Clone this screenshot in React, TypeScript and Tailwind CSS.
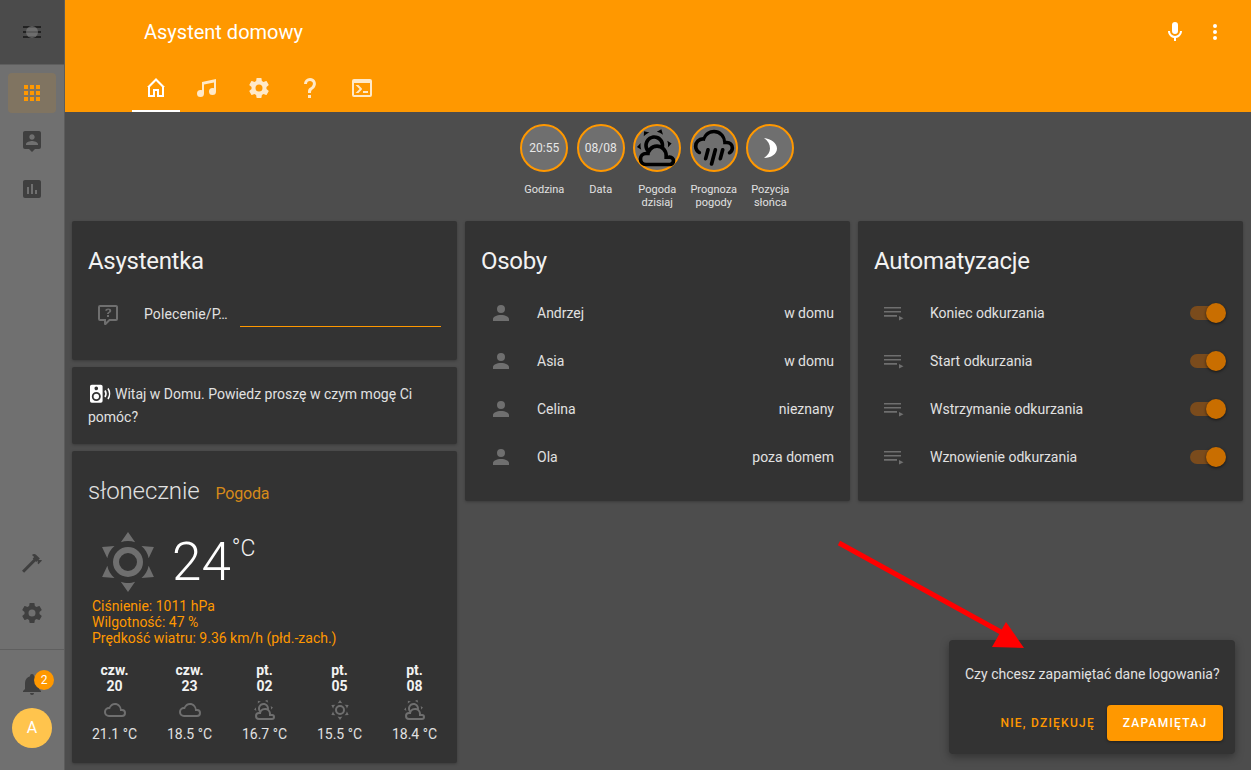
const paths = {
  sunny:
    "M12,7A5,5 0 0,1 17,12A5,5 0 0,1 12,17A5,5 0 0,1 7,12A5,5 0 0,1 12,7M12,9A3,3 0 0,0 9,12A3,3 0 0,0 12,15A3,3 0 0,0 15,12A3,3 0 0,0 12,9M12,2L14.39,5.42C13.65,5.15 12.84,5 12,5C11.16,5 10.35,5.15 9.61,5.42L12,2M3.34,7L7.5,6.65C6.9,7.16 6.36,7.78 5.94,8.5C5.5,9.24 5.25,10 5.11,10.79L3.34,7M3.36,17L5.12,13.23C5.26,14 5.53,14.78 5.95,15.5C6.37,16.24 6.91,16.86 7.5,17.37L3.36,17M20.65,7L18.88,10.79C18.74,10 18.47,9.23 18.05,8.5C17.63,7.78 17.1,7.15 16.5,6.64L20.65,7M20.64,17L16.5,17.36C17.09,16.85 17.62,16.22 18.04,15.5C18.46,14.77 18.73,14 18.87,13.21L20.64,17M12,22L9.59,18.56C10.33,18.83 11.14,19 12,19C12.82,19 13.63,18.83 14.37,18.56L12,22Z",
  partly:
    "M12.74,5.47C15.1,6.5 16.35,9.03 15.92,11.46C17.19,12.56 18,14.19 18,16V16.17C18.31,16.06 18.65,16 19,16A3,3 0 0,1 22,19A3,3 0 0,1 19,22H6A4,4 0 0,1 2,18A4,4 0 0,1 6,14H6.27C5,12.45 4.6,10.24 5.5,8.26C6.72,5.5 9.97,4.24 12.74,5.47M11.93,7.3C10.16,6.5 8.09,7.31 7.31,9.07C6.85,10.09 6.93,11.22 7.41,12.13C8.5,10.83 10.16,10 12,10C12.7,10 13.38,10.12 14,10.34C13.94,9.06 13.18,7.86 11.93,7.3M13.55,3.64C13,3.4 12.45,3.23 11.88,3.12L14.37,1.82L15.27,4.71C14.76,4.29 14.19,3.93 13.55,3.64M6.09,4.44C5.6,4.79 5.17,5.19 4.8,5.63L4.91,2.82L7.87,3.5C7.25,3.71 6.65,4.03 6.09,4.44M18,9.71C17.91,9.12 17.78,8.55 17.59,8L19.97,9.5L17.92,11.73C18.03,11.08 18.05,10.4 18,9.71M3.04,11.3C3.11,11.9 3.24,12.47 3.43,13L1.06,11.5L3.1,9.28C3,9.93 2.97,10.61 3.04,11.3M19,18H16V16A4,4 0 0,0 12,12A4,4 0 0,0 8,16H6A2,2 0 0,0 4,18A2,2 0 0,0 6,20H19A1,1 0 0,0 20,19A1,1 0 0,0 19,18Z",
  cloudy:
    "M6,19A5,5 0 0,1 1,14A5,5 0 0,1 6,9C7,6.65 9.3,5 12,5C15.43,5 18.24,7.66 18.5,11.03L19,11A4,4 0 0,1 23,15A4,4 0 0,1 19,19H6M19,13H17V12A5,5 0 0,0 12,7C9.5,7 7.45,8.82 7.06,11.19C6.73,11.07 6.37,11 6,11A3,3 0 0,0 3,14A3,3 0 0,0 6,17H19A2,2 0 0,0 21,15A2,2 0 0,0 19,13Z",
  pouring:
    "M9,12C9.53,12.14 9.85,12.69 9.71,13.22L8.41,18.05C8.27,18.59 7.72,18.9 7.19,18.76C6.65,18.62 6.34,18.07 6.5,17.54L7.78,12.71C7.92,12.17 8.47,11.86 9,12M13,12C13.53,12.14 13.85,12.69 13.71,13.22L11.64,20.95C11.5,21.5 10.95,21.8 10.41,21.66C9.88,21.5 9.56,20.97 9.7,20.43L11.78,12.71C11.92,12.17 12.47,11.86 13,12M17,12C17.53,12.14 17.85,12.69 17.71,13.22L16.41,18.05C16.27,18.59 15.72,18.9 15.19,18.76C14.65,18.62 14.34,18.07 14.5,17.54L15.78,12.71C15.92,12.17 16.47,11.86 17,12M17,10V9A5,5 0 0,0 12,4C9.5,4 7.45,5.82 7.06,8.19C6.73,8.07 6.37,8 6,8A3,3 0 0,0 3,11C3,12.11 3.6,13.08 4.5,13.6V13.59C5,13.87 5.14,14.5 4.87,14.96C4.59,15.43 4,15.6 3.5,15.32V15.33C2,14.47 1,12.85 1,11A5,5 0 0,1 6,6C7,3.65 9.3,2 12,2C15.43,2 18.24,4.66 18.5,8.03L19,8A4,4 0 0,1 23,12C23,13.5 22.2,14.77 21,15.46V15.46C20.5,15.73 19.91,15.57 19.63,15.09C19.36,14.61 19.5,14 20,13.72V13.73C20.6,13.39 21,12.74 21,12A2,2 0 0,0 19,10H17Z",
  home: "M12 2L3 11H4V21H11V15H13V21H20V11H21ZM12 5L18 10.9V19H15V13H9V19H6V10.9Z",
  music:
    "M21,3V15.5A3.5,3.5 0 0,1 17.5,19A3.5,3.5 0 0,1 14,15.5A3.5,3.5 0 0,1 17.5,12C18.04,12 18.55,12.12 19,12.34V6.47L9,8.6V17.5A3.5,3.5 0 0,1 5.5,21A3.5,3.5 0 0,1 2,17.5A3.5,3.5 0 0,1 5.5,14C6.04,14 6.55,14.12 7,14.34V6L21,3Z",
  cog: "M12,15.5A3.5,3.5 0 0,1 8.5,12A3.5,3.5 0 0,1 12,8.5A3.5,3.5 0 0,1 15.5,12A3.5,3.5 0 0,1 12,15.5M19.43,12.97C19.47,12.65 19.5,12.33 19.5,12C19.5,11.67 19.47,11.34 19.43,11L21.54,9.37C21.73,9.22 21.78,8.95 21.66,8.73L19.66,5.27C19.54,5.05 19.27,4.96 19.05,5.05L16.56,6.05C16.04,5.66 15.5,5.32 14.87,5.07L14.5,2.42C14.46,2.18 14.25,2 14,2H10C9.75,2 9.54,2.18 9.5,2.42L9.13,5.07C8.5,5.32 7.96,5.66 7.44,6.05L4.95,5.05C4.73,4.96 4.46,5.05 4.34,5.27L2.34,8.73C2.21,8.95 2.27,9.22 2.46,9.37L4.57,11C4.53,11.34 4.5,11.67 4.5,12C4.5,12.33 4.53,12.65 4.57,12.97L2.46,14.63C2.27,14.78 2.21,15.05 2.34,15.27L4.34,18.73C4.46,18.95 4.73,19.03 4.95,18.95L7.44,17.94C7.96,18.34 8.5,18.68 9.13,18.93L9.5,21.58C9.54,21.82 9.75,22 10,22H14C14.25,22 14.46,21.82 14.5,21.58L14.87,18.93C15.5,18.67 16.04,18.34 16.56,17.94L19.05,18.95C19.27,19.03 19.54,18.95 19.66,18.73L21.66,15.27C21.78,15.05 21.73,14.78 21.54,14.63L19.43,12.97Z",
  help: "M10,19H13V22H10V19M12,2C17.35,2.22 19.68,7.62 16.5,11.67C15.67,12.67 14.33,13.33 13.67,14.17C13,15 13,16 13,17H10C10,15.33 10,13.92 10.67,12.92C11.33,11.92 12.67,11.33 13.5,10.67C15.92,8.43 15.32,5.26 12,5A3,3 0 0,0 9,8H6A6,6 0 0,1 12,2Z",
  console:
    "M20,19V7H4V19H20M20,3A2,2 0 0,1 22,5V19A2,2 0 0,1 20,21H4A2,2 0 0,1 2,19V5A2,2 0 0,1 4,3H20M13,17V15H18V17H13M9.58,13L5.57,9H8.4L11.7,12.3C12.09,12.69 12.09,13.33 11.7,13.72L8.42,17H5.59L9.58,13Z",
  mic: "M12,2A3,3 0 0,1 15,5V11A3,3 0 0,1 12,14A3,3 0 0,1 9,11V5A3,3 0 0,1 12,2M19,11C19,14.53 16.39,17.44 13,17.93V21H11V17.93C7.61,17.44 5,14.53 5,11H7A5,5 0 0,0 12,16A5,5 0 0,0 17,11H19Z",
  dots: "M12,16A2,2 0 0,1 14,18A2,2 0 0,1 12,20A2,2 0 0,1 10,18A2,2 0 0,1 12,16M12,10A2,2 0 0,1 14,12A2,2 0 0,1 12,14A2,2 0 0,1 10,12A2,2 0 0,1 12,10M12,4A2,2 0 0,1 14,6A2,2 0 0,1 12,8A2,2 0 0,1 10,6A2,2 0 0,1 12,4Z",
  apps: "M16,20H20V16H16M16,14H20V10H16M10,8H14V4H10M16,8H20V4H16M10,14H14V10H10M4,14H8V10H4M4,20H8V16H4M10,20H14V16H10M4,8H8V4H4V8Z",
  accountBox:
    "M18,16H6V15.1C6,13.1 10,12 12,12C14,12 18,13.1 18,15.1M12,5.3C13.5,5.3 14.7,6.5 14.7,8C14.7,9.5 13.5,10.7 12,10.7C10.5,10.7 9.3,9.5 9.3,8C9.3,6.5 10.5,5.3 12,5.3M19,2H5C3.89,2 3,2.89 3,4V18A2,2 0 0,0 5,20H9L12,23L15,20H19A2,2 0 0,0 21,18V4C21,2.89 20.1,2 19,2Z",
  chart:
    "M19,3H5C3.89,3 3,3.89 3,5V19A2,2 0 0,0 5,21H19A2,2 0 0,0 21,19V5C21,3.89 20.1,3 19,3M9,17H7V10H9V17M13,17H11V7H13V17M17,17H15V13H17V17Z",
  hammer:
    "M2 19.63L13.43 8.2L12.72 7.5L14.14 6.07L12 3.89C13.2 2.7 15.09 2.7 16.27 3.89L19.87 7.5L18.45 8.91H21.29L22 9.62L18.45 13.21L17.74 12.5V9.62L16.27 11.04L15.56 10.33L4.13 21.76L2 19.63Z",
  bell: "M21,19V20H3V19L5,17V11C5,7.9 7.03,5.17 10,4.29C10,4.19 10,4.1 10,4A2,2 0 0,1 12,2A2,2 0 0,1 14,4C14,4.1 14,4.19 14,4.29C16.97,5.17 19,7.9 19,11V17L21,19M14,21A2,2 0 0,1 12,23A2,2 0 0,1 10,21",
  person:
    "M12,4A4,4 0 0,1 16,8A4,4 0 0,1 12,12A4,4 0 0,1 8,8A4,4 0 0,1 12,4M12,14C16.42,14 20,15.79 20,18V20H4V18C4,15.79 7.58,14 12,14Z",
  playlist: "M2,6H19V7.6H2V6M2,10H19V11.6H2V10M2,14H15V15.7H2V14M17,15V19.6L21.5,17.3L17,15Z",
  commentQuestion:
    "M4,2A2,2 0 0,0 2,4V16A2,2 0 0,0 4,18H8V21A1,1 0 0,0 9,22H9.5C9.75,22 10,21.9 10.2,21.71L13.9,18H20A2,2 0 0,0 22,16V4C22,2.89 21.1,2 20,2H4M4,4H20V16H13.08L10,19.08V16H4V4M12.19,5.5C11.3,5.5 10.59,5.68 10.05,6.04C9.5,6.4 9.22,7 9.27,7.69H11.24C11.24,7.41 11.34,7.2 11.5,7.06C11.7,6.92 11.92,6.85 12.19,6.85C12.5,6.85 12.77,6.93 12.95,7.11C13.13,7.28 13.22,7.5 13.22,7.8C13.22,8.08 13.14,8.33 13,8.54C12.83,8.76 12.62,8.94 12.36,9.08C11.84,9.4 11.5,9.68 11.29,9.92C11.1,10.16 11,10.5 11,11H13C13,10.72 13.05,10.5 13.14,10.32C13.23,10.15 13.4,10 13.66,9.85C14.12,9.64 14.5,9.36 14.79,9C15.08,8.63 15.23,8.24 15.23,7.8C15.23,7.1 14.96,6.54 14.42,6.12C13.88,5.71 13.13,5.5 12.19,5.5M11,12V14H13V12H11Z",
  speaker:
    "M12,12A3,3 0 0,0 9,15A3,3 0 0,0 12,18A3,3 0 0,0 15,15A3,3 0 0,0 12,12M12,20A5,5 0 0,1 7,15A5,5 0 0,1 12,10A5,5 0 0,1 17,15A5,5 0 0,1 12,20M12,4A2,2 0 0,1 14,6A2,2 0 0,1 12,8C10.89,8 10,7.1 10,6C10,4.89 10.89,4 12,4M17,2H7C5.89,2 5,2.89 5,4V20A2,2 0 0,0 7,22H17A2,2 0 0,0 19,20V4C19,2.89 18.1,2 17,2Z",
};

function Icon({ d, className = "size-6" }: { d: string; className?: string }) {
  return (
    <svg viewBox="0 0 24 24" className={`shrink-0 fill-current ${className}`}>
      <path d={d} />
    </svg>
  );
}

function Sidebar() {
  return (
    <aside className="flex h-full w-[65px] shrink-0 flex-col border-r border-[#5c5c5c] bg-[#707070] text-[#3f3f3f]">
      <div className="flex h-[65px] shrink-0 items-center justify-center border-b border-[#5e5e5e] bg-[#4b4b4b]">
        <svg viewBox="0 0 18 12" className="h-3 w-[18px]">
          <path d="M0 0H18V2H0ZM0 5H18V7H0ZM0 10H18V12H0Z" fill="#222222" />
          <circle cx="9" cy="6" r="6" fill="#8a8a8a" opacity="0.55" />
        </svg>
      </div>
      <nav className="mt-2 flex flex-col items-center gap-2">
        <div className="flex h-10 w-12 items-center justify-center rounded bg-[#807461] text-[#ff9800]">
          <Icon d={paths.apps} />
        </div>
        <div className="flex h-10 w-12 items-center justify-center">
          <Icon d={paths.accountBox} />
        </div>
        <div className="flex h-10 w-12 items-center justify-center">
          <Icon d={paths.chart} />
        </div>
      </nav>
      <div className="flex-1" />
      <div className="flex flex-col items-center gap-2 pb-4">
        <div className="flex h-10 w-12 items-center justify-center pb-1">
          <Icon d={paths.hammer} />
        </div>
        <div className="flex h-10 w-12 items-center justify-center">
          <Icon d={paths.cog} />
        </div>
      </div>
      <div className="flex flex-col items-center border-t border-[#5f5f5f] pt-[22px] pb-[22px]">
        <div className="relative flex h-6 w-12 items-center justify-center">
          <Icon d={paths.bell} />
          <span className="absolute top-[-2px] right-[2px] flex size-5 items-center justify-center rounded-full bg-[#ff9800] text-xs text-white">
            2
          </span>
        </div>
        <div className="mt-3 flex size-10 items-center justify-center rounded-full bg-[#ffc44d] text-base text-white">
          A
        </div>
      </div>
    </aside>
  );
}

function Header() {
  const tabs = [paths.music, paths.cog, paths.help, paths.console];
  return (
    <header className="h-[112px] shrink-0 bg-[#ff9800] text-white">
      <div className="flex h-16 items-center pr-[24px] pl-[79px]">
        <h1 className="flex-1 text-xl">Asystent domowy</h1>
        <div className="flex items-center gap-4">
          <Icon d={paths.mic} />
          <Icon d={paths.dots} />
        </div>
      </div>
      <div className="flex h-12 gap-[3.4px] pl-[67px]">
        <div className="flex w-12 items-center justify-center border-b-2 border-white pt-[2px]">
          <Icon d={paths.home} />
        </div>
        {tabs.map((d) => (
          <div key={d} className="flex w-12 items-center justify-center text-[#ffe9c8]">
            <Icon d={d} />
          </div>
        ))}
      </div>
    </header>
  );
}

function Badge({ label, children }: { label: string; children: React.ReactNode }) {
  return (
    <div className="flex w-[56.5px] flex-col items-center">
      <div className="flex size-12 items-center justify-center rounded-full border-2 border-[#ff9800] bg-[#6f6f6f] text-xs text-[#e8e8e8]">
        {children}
      </div>
      <div className="mt-[11px] w-[56px] text-center text-[11px] leading-[13px] text-[#e1e1e1]">
        {label}
      </div>
    </div>
  );
}

function BadgeRow() {
  return (
    <div className="flex h-[109px] justify-center pt-3 pr-[1.5px]">
      <Badge label="Godzina">20:55</Badge>
      <Badge label="Data">08/08</Badge>
      <Badge label="Pogoda dzisiaj">
        <Icon d={paths.partly} className="size-11 text-black" />
      </Badge>
      <Badge label="Prognoza pogody">
        <Icon d={paths.pouring} className="size-11 text-black" />
      </Badge>
      <Badge label="Pozycja słońca">
        <svg viewBox="0 0 16 22" className="h-[22px] w-4 fill-white">
          <path d="M2 1C9 2 15 6 15 11.5C15 17 9 21 2 21C6 18 8 15 8 11.5C8 7.5 6 3.5 2 1Z" />
        </svg>
      </Badge>
    </div>
  );
}

function Card({ className = "", children }: { className?: string; children: React.ReactNode }) {
  return (
    <div className={`rounded-[2px] bg-[#333333] shadow-[0_1px_3px_rgba(0,0,0,0.25)] ${className}`}>
      {children}
    </div>
  );
}

function CardTitle({ children }: { children: React.ReactNode }) {
  return (
    <h2 className="px-4 pt-6 pb-3 text-2xl leading-8 tracking-[-0.012em] text-[#f2f2f2]">
      {children}
    </h2>
  );
}

function Row({ icon, label, children }: { icon: React.ReactNode; label: string; children: React.ReactNode }) {
  return (
    <div className="flex h-12 items-center px-4">
      <div className="flex w-14 shrink-0 pl-2 text-[#6f6f6f]">{icon}</div>
      <div className="flex-1 text-sm text-[#e1e1e1]">{label}</div>
      {children}
    </div>
  );
}

function Toggle() {
  return (
    <div className="relative h-[14px] w-[32px] rounded-full bg-[#7a4b1c]">
      <span className="absolute top-[-3px] right-[-4px] size-5 rounded-full bg-[#c96e00] shadow-[0_1px_3px_rgba(0,0,0,0.6)]" />
    </div>
  );
}

const forecast = [
  { day: "czw.", date: "20", icon: paths.cloudy, temp: "21.1 °C" },
  { day: "czw.", date: "23", icon: paths.cloudy, temp: "18.5 °C" },
  { day: "pt.", date: "02", icon: paths.partly, temp: "16.7 °C" },
  { day: "pt.", date: "05", icon: paths.sunny, temp: "15.5 °C" },
  { day: "pt.", date: "08", icon: paths.partly, temp: "18.4 °C" },
];

function WeatherCard() {
  return (
    <Card className="h-[312px]">
      <div className="flex items-baseline px-4 pt-6">
        <span className="text-2xl leading-8 font-light tracking-[-0.1px] text-[#e1e1e1]">słonecznie</span>
        <span className="ml-4 text-base tracking-[-0.2px] text-[#d68a1a]">Pogoda</span>
      </div>
      <div className="mt-[19px] flex h-[72px] items-center pl-5">
        <Icon d={paths.sunny} className="size-[72px] text-[#6f6f6f]" />
        <div className="ml-2 flex items-start">
          <span className="text-[53px] leading-[60px] font-light text-white">24</span>
          <span className="mt-[5px] ml-[1px] text-[23px] leading-6 font-light text-[#f2f2f2]">°C</span>
        </div>
      </div>
      <div className="pl-5 text-sm leading-4 text-[#ff9800]">
        <div>Ciśnienie: 1011 hPa</div>
        <div>Wilgotność: 47 %</div>
        <div>Prędkość wiatru: 9.36 km/h (płd.-zach.)</div>
      </div>
      <div className="mt-[16px] grid grid-cols-5 px-[5px] text-center text-sm">
        {forecast.map((f) => (
          <div key={f.date} className="flex flex-col items-center">
            <div className="leading-4 font-bold text-[#f2f2f2]">{f.day}</div>
            <div className="leading-4 font-bold text-[#f2f2f2]">{f.date}</div>
            <Icon d={f.icon} className="mt-[4px] size-6 text-[#6f6f6f]" />
            <div className="mt-[2px] leading-5 text-[#e1e1e1]">{f.temp}</div>
          </div>
        ))}
      </div>
    </Card>
  );
}

function SaveLoginPrompt() {
  return (
    <div className="absolute top-[640px] left-[949px] h-[114px] w-[286px] rounded bg-[#333333] px-4 pt-6 shadow-[0_3px_8px_rgba(0,0,0,0.35)]">
      <div className="text-center text-sm leading-5 whitespace-nowrap text-[#e1e1e1]">
        Czy chcesz zapamiętać dane logowania?
      </div>
      <div className="mt-[21px] -mr-1 flex items-center justify-end gap-3">
        <span className="text-xs font-medium tracking-[1.25px] text-[#ff9800]">NIE, DZIĘKUJĘ</span>
        <span className="flex h-9 w-[116px] items-center justify-center rounded bg-[#ff9800] text-xs font-medium tracking-[1.25px] text-white shadow-[0_1px_3px_rgba(0,0,0,0.4)]">
          ZAPAMIĘTAJ
        </span>
      </div>
    </div>
  );
}

export default function App() {
  const people = [
    ["Andrzej", "w domu"],
    ["Asia", "w domu"],
    ["Celina", "nieznany"],
    ["Ola", "poza domem"],
  ];
  const automations = [
    "Koniec odkurzania",
    "Start odkurzania",
    "Wstrzymanie odkurzania",
    "Wznowienie odkurzania",
  ];

  return (
    <div className="relative flex h-[770px] w-[1251px] overflow-hidden bg-[#4d4d4d] font-['Roboto',sans-serif]">
      <Sidebar />
      <main className="flex min-w-0 flex-1 flex-col">
        <Header />
        <BadgeRow />
        <div className="grid grid-cols-3 items-start gap-2 pr-2 pl-[7px]">
          <div className="flex flex-col gap-[7px]">
            <Card className="h-[139px]">
              <CardTitle>Asystentka</CardTitle>
              <div className="flex h-12 items-center px-4">
                <div className="mt-1 flex w-14 shrink-0 pl-2 text-[#6f6f6f]">
                  <Icon d={paths.commentQuestion} />
                </div>
                <div className="mt-[2px] w-24 text-sm tracking-[0.1px] text-[#e1e1e1]">Polecenie/P…</div>
                <div className="mt-[26px] flex-1 border-b border-[#ff9800]" />
              </div>
            </Card>
            <Card className="h-[77px] px-4 pt-[16px] text-sm leading-[23px] text-[#e1e1e1]">
              <svg viewBox="0 0 23 20" className="mr-1 inline-block h-5 w-[23px] align-[-4px]">
                <g transform="translate(-2.5 0) scale(0.9)">
                  <path d={paths.speaker} fill="#ffffff" />
                </g>
                <path d="M17 7.5C18.2 9.5 18.2 12 17 14M20 5.5C22 8.5 22 13 20 16" fill="none" stroke="#ffffff" strokeWidth="1.6" />
              </svg>
              Witaj w Domu. Powiedz proszę w czym mogę Ci pomóc?
            </Card>
            <WeatherCard />
          </div>
          <Card className="h-[280px]">
            <CardTitle>Osoby</CardTitle>
            {people.map(([name, state]) => (
              <Row key={name} icon={<Icon d={paths.person} />} label={name}>
                <span className="text-sm text-[#e1e1e1]">{state}</span>
              </Row>
            ))}
          </Card>
          <Card className="h-[280px]">
            <CardTitle>Automatyzacje</CardTitle>
            {automations.map((name) => (
              <Row key={name} icon={<Icon d={paths.playlist} />} label={name}>
                <Toggle />
                <span className="w-[5px]" />
              </Row>
            ))}
          </Card>
        </div>
      </main>
      <SaveLoginPrompt />
      <svg className="pointer-events-none absolute top-[535px] left-[830px] h-[120px] w-[200px]" viewBox="830 535 200 120">
        <path d="M839 543L1010 637" stroke="#ff0000" strokeWidth="5" fill="none" />
        <path d="M1006 622L992 647L1024 648Z" fill="#ff0000" />
      </svg>
    </div>
  );
}
